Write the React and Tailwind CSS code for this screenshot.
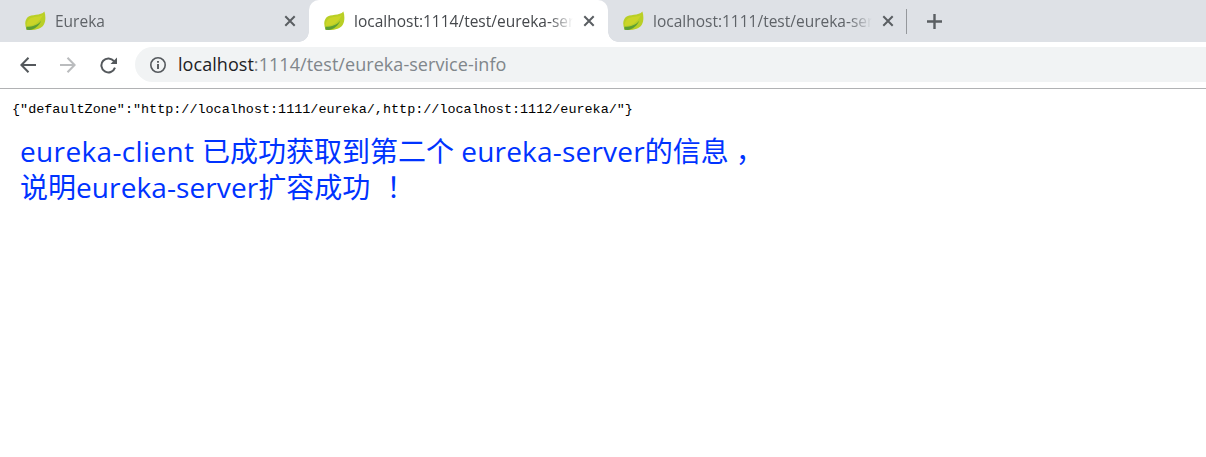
import React from 'react';

function Leaf() {
  return (
    <svg className="h-5 w-[21px] shrink-0" viewBox="0 0 21 20">
      <path d="M19.400 0.400C20.800 4.500 20.800 10 18.900 13.500C16.200 18.600 8.500 19.600 1.600 18.800C-0.200 14.500-0.500 9.500 2.600 6.300C6.200 2.700 15.800 5 19.400 0.400Z" fill="#b9cf26" />
      <path d="M18 3.800C14.500 6.800 8 5 4.400 8C2.300 9.800 1.600 12 1.900 15C8.500 15 14.500 11.500 18 3.800Z" fill="#cbd528" />
      <path d="M1.600 18.800C1.300 17.700 1.200 16.800 1.500 15.800C8 15.800 13 13.800 16.200 9.800C14.300 14.700 9.500 18.600 4.600 19Z" fill="#5c9f35" />
    </svg>
  );
}

function Close() {
  return (
    <svg className="h-3 w-3 shrink-0" viewBox="0 0 12 12" stroke="#5a5e62" strokeWidth="2">
      <path d="M1.300 1.300L10.700 10.700M10.700 1.300L1.300 10.700" />
    </svg>
  );
}

function Tab({ title, active }) {
  return (
    <div className={active
      ? 'relative flex h-full w-[299px] shrink-0 items-center rounded-t-[10px] bg-white pl-[15px]'
      : 'flex h-full w-[299px] shrink-0 items-center pl-[15px]'}>
      {active && (
        <>
          <span className="absolute bottom-0 -left-[10px] h-[10px] w-[10px] bg-[radial-gradient(circle_at_0_0,transparent_9.500px,#ffffff_10px)]" />
          <span className="absolute -right-[10px] bottom-0 h-[10px] w-[10px] bg-[radial-gradient(circle_at_100%_0,transparent_9.500px,#ffffff_10px)]" />
        </>
      )}
      <Leaf />
      <span className={active
        ? 'ml-[9px] w-[219px] overflow-hidden pt-[2px] whitespace-nowrap text-[#45484c] [mask-image:linear-gradient(90deg,#000_195px,transparent_219px)]'
        : 'ml-[9px] w-[219px] overflow-hidden pt-[2px] whitespace-nowrap text-[#5f6368] [mask-image:linear-gradient(90deg,#000_195px,transparent_219px)]'}>
        {title}
      </span>
      <span className="ml-[10px] flex"><Close /></span>
    </div>
  );
}

export default function App() {
  return (
    <div className="h-[457px] w-[1206px] overflow-hidden bg-white font-['Open_Sans','Noto_Sans_CJK_SC',sans-serif]">
      <div className="flex h-[42px] items-center bg-[#dee1e6] pl-[10px] text-[15.500px]">
        <Tab title="Eureka" />
        <Tab title="localhost:1114/test/eureka-service-info" active />
        <Tab title="localhost:1111/test/eureka-service-info" />
        <div className="-ml-px h-[25px] w-px bg-[#95989c]" />
        <svg className="ml-[20px] h-[15px] w-[15px]" viewBox="0 0 15 15" stroke="#5a5e62" strokeWidth="2.400">
          <path d="M7.500 0V15M0 7.500H15" />
        </svg>
      </div>
      <div className="flex h-[47px] items-center border-b border-[#b1b2b4] pl-[20px]">
        <svg className="h-4 w-4" viewBox="0 0 16 16" fill="none" stroke="#54585c" strokeWidth="2">
          <path d="M16 8H1.500M8.500 0.700L1.400 8L8.500 15.300" />
        </svg>
        <svg className="ml-[24px] h-4 w-4" viewBox="0 0 16 16" fill="none" stroke="#babcbe" strokeWidth="2">
          <path d="M0 8H14.500M7.500 0.700L14.600 8L7.500 15.300" />
        </svg>
        <svg className="ml-[24px] h-[17px] w-[17px]" viewBox="0 0 17 17" fill="none">
          <path d="M14 4.200A7 7 0 1 0 15 10.700" stroke="#54585c" strokeWidth="2" />
          <path d="M17 0.500V7H10.500Z" fill="#54585c" />
        </svg>
        <div className="-mt-px ml-[18px] flex h-[35px] flex-1 items-center rounded-l-full bg-[#f1f3f4] pl-[15px]">
          <svg className="h-4 w-4" viewBox="0 0 16 16" fill="none">
            <circle cx="8" cy="8" r="7.200" stroke="#55595d" strokeWidth="1.600" />
            <path d="M8 7V12M8 4V5.700" stroke="#55595d" strokeWidth="1.900" />
          </svg>
          <span className="ml-[12px] text-[18px] tracking-[0.05px] whitespace-nowrap text-[#80868b]">
            <span className="text-[#202124]">localhost</span>:1114/test/eureka-service-info
          </span>
        </div>
      </div>
      <pre className="mt-[11px] ml-[12px] font-['Liberation_Mono',monospace] text-[13.450px] leading-5 text-black">{'{"defaultZone":"http://localhost:1111/eureka/,http://localhost:1112/eureka/"}'}</pre>
      <div className="mt-[13px] ml-[20px] text-[28px] leading-[36px] whitespace-nowrap text-[#0033ff]">
        <p>
          <span className="tracking-[0.350px]">eureka-client </span>
          <span>已成功获取到第二个 </span>
          <span className="tracking-[0.200px]">eureka-server</span>的信息<span className="ml-[7px]">，</span>
        </p>
        <p>
          说明<span className="tracking-[0.100px]">eureka-server</span>扩容成功 <span className="ml-[9px]">！</span>
        </p>
      </div>
    </div>
  );
}
